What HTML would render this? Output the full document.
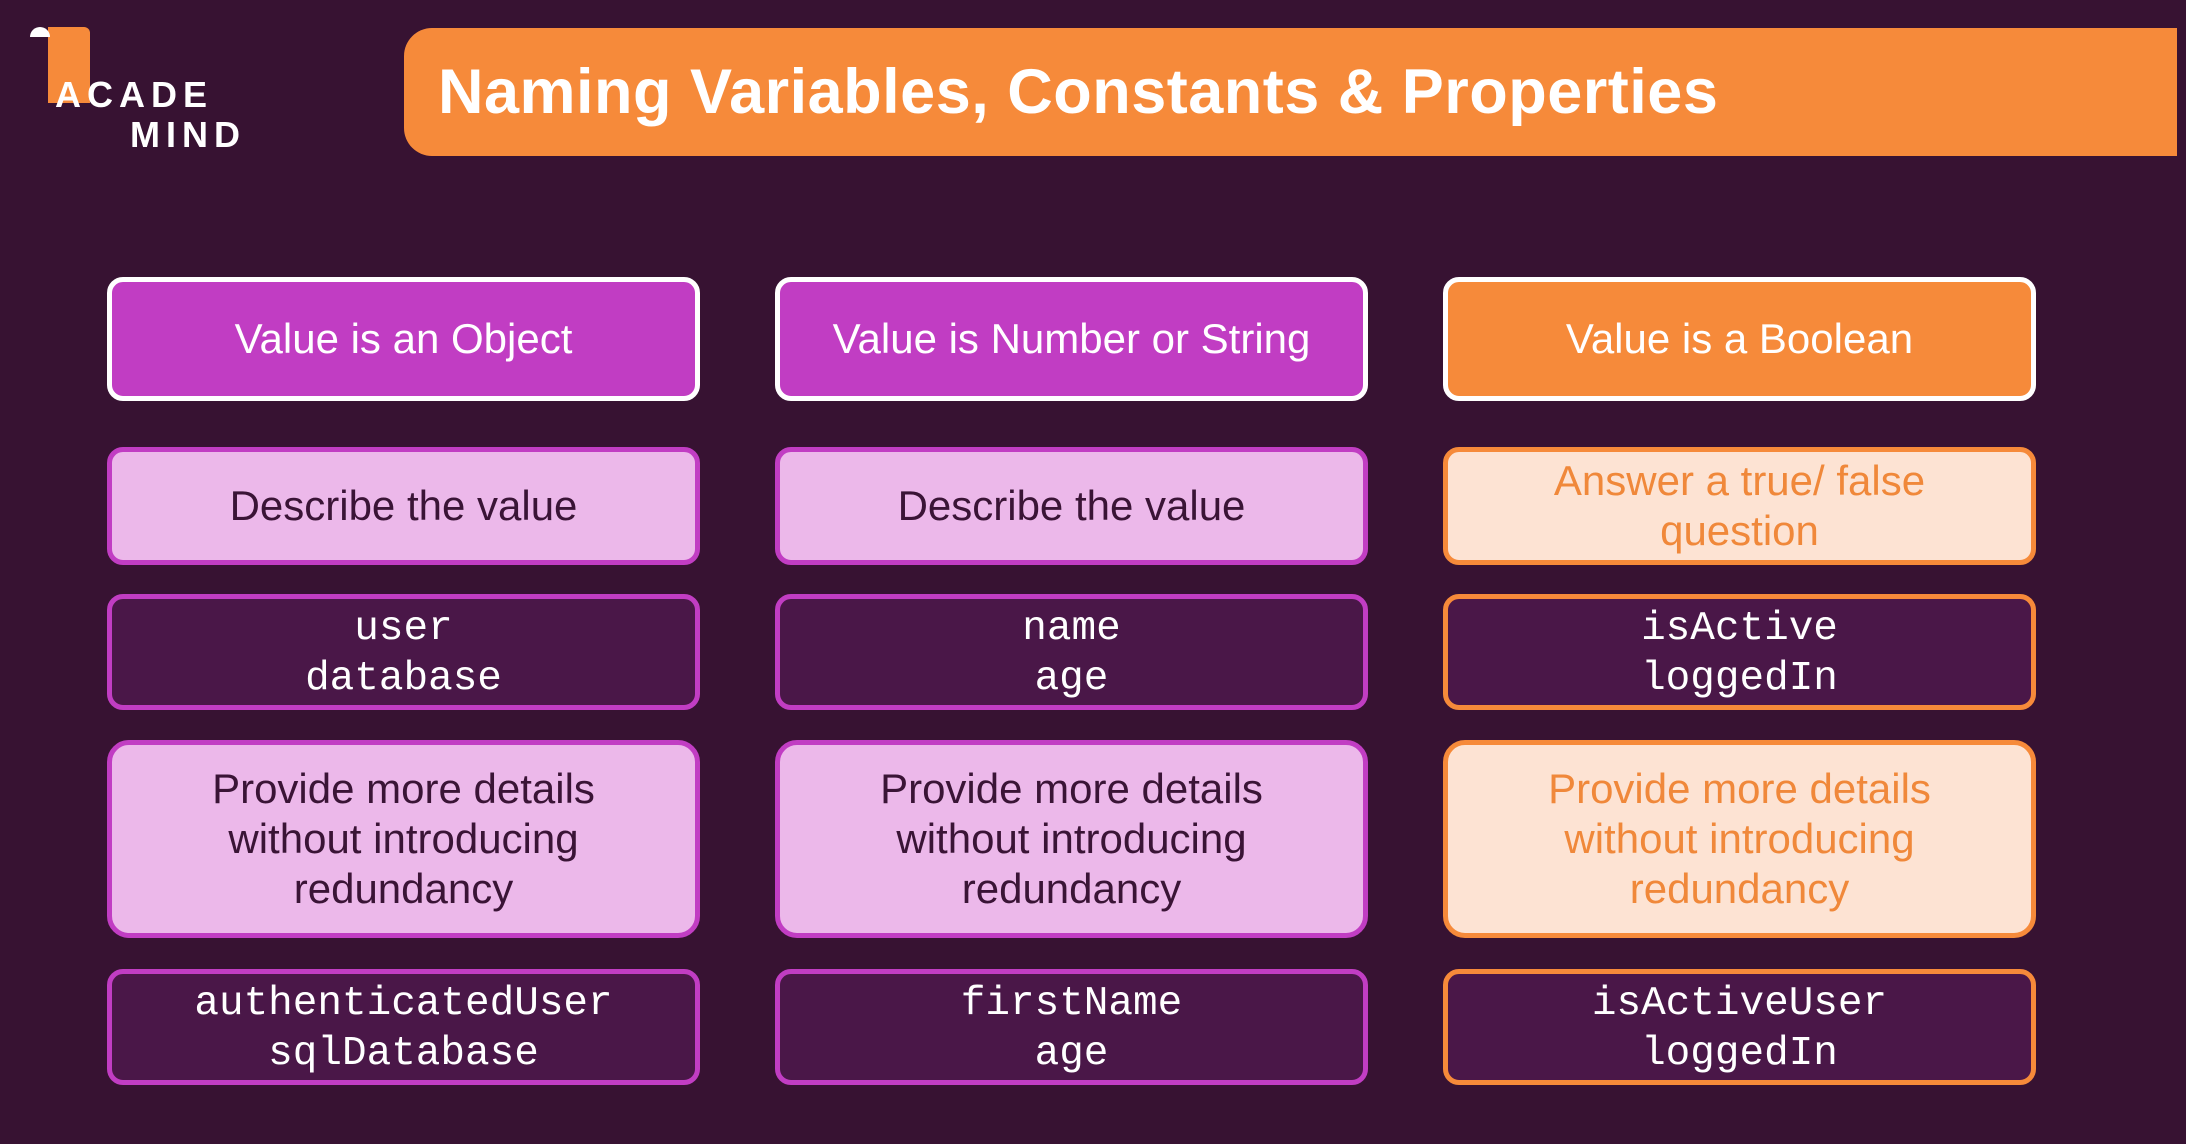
<!DOCTYPE html>
<html><head><meta charset="utf-8"><style>
*{margin:0;padding:0;box-sizing:border-box}
body{width:2186px;height:1144px;background:#371232;position:relative;overflow:hidden;font-family:"Liberation Sans","DejaVu Sans",sans-serif}
.title{position:absolute;left:404px;top:28px;width:1773px;height:128px;background:#f68a3a;border-radius:28px 0 0 28px;color:#fff;font-weight:bold;font-size:63px;line-height:128px;padding-left:34px;letter-spacing:0.5px}
.box{position:absolute;width:593px;display:flex;align-items:center;justify-content:center;text-align:center;border-radius:16px;font-size:42px;line-height:50px}
.h{border:5px solid #fff;color:#fff}
.hp{background:#c13dc3}.ho{background:#f68a3a}
.lp{background:#ecb8ea;border:5px solid #c13dc3;color:#3a1436}
.lo{background:#fde3d3;border:5px solid #f68a3a;color:#f0883a}
.dp,.do{background:#4a1748;color:#fff;font-family:"Liberation Mono","DejaVu Sans Mono",monospace;font-size:41px;padding-top:4px}
.dp{border:5px solid #c13dc3}
.do{border:5px solid #f68a3a}
.logo{position:absolute;color:#fff;font-weight:bold;font-size:36px;letter-spacing:6px}
</style></head><body>
<div style="position:absolute;left:48px;top:27px;width:42px;height:76px;background:#f68a3a;border-radius:0 6px 0 0"></div>
<div style="position:absolute;left:30px;top:27px;width:20px;height:10px;background:#fff;border-radius:10px 10px 0 0"></div>
<div class="logo" style="left:55px;top:74px">ACADE</div>
<div class="logo" style="left:130px;top:114px">MIND</div>
<div class="title">Naming Variables, Constants &amp; Properties</div>

<div class="box h hp" style="left:107px;top:277px;height:124px">Value is an Object</div>
<div class="box h hp" style="left:775px;top:277px;height:124px">Value is Number or String</div>
<div class="box h ho" style="left:1443px;top:277px;height:124px">Value is a Boolean</div>

<div class="box lp" style="left:107px;top:447px;height:118px">Describe the value</div>
<div class="box lp" style="left:775px;top:447px;height:118px">Describe the value</div>
<div class="box lo" style="left:1443px;top:447px;height:118px">Answer a true/ false<br>question</div>

<div class="box dp" style="left:107px;top:594px;height:116px">user<br>database</div>
<div class="box dp" style="left:775px;top:594px;height:116px">name<br>age</div>
<div class="box do" style="left:1443px;top:594px;height:116px">isActive<br>loggedIn</div>

<div class="box lp" style="left:107px;top:740px;height:198px;border-radius:22px">Provide more details<br>without introducing<br>redundancy</div>
<div class="box lp" style="left:775px;top:740px;height:198px;border-radius:22px">Provide more details<br>without introducing<br>redundancy</div>
<div class="box lo" style="left:1443px;top:740px;height:198px;border-radius:22px">Provide more details<br>without introducing<br>redundancy</div>

<div class="box dp" style="left:107px;top:969px;height:116px">authenticatedUser<br>sqlDatabase</div>
<div class="box dp" style="left:775px;top:969px;height:116px">firstName<br>age</div>
<div class="box do" style="left:1443px;top:969px;height:116px">isActiveUser<br>loggedIn</div>
</body></html>
